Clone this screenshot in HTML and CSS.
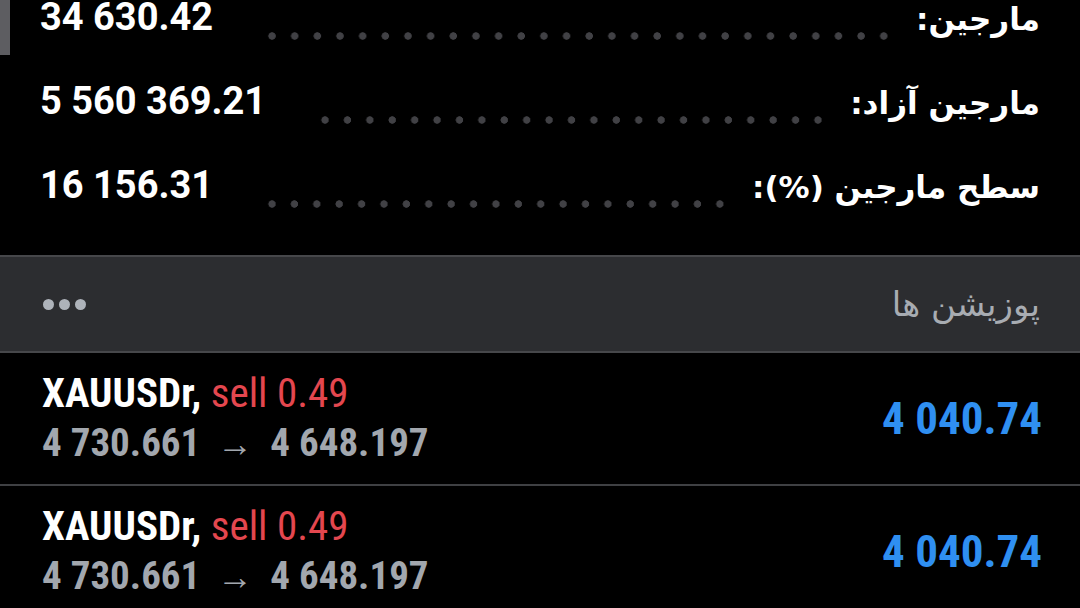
FILE: index.html
```html
<!DOCTYPE html>
<html lang="fa">
<head>
  <meta charset="UTF-8">
  <title>معاملات</title>
  <meta name="viewport" content="width=device-width, initial-scale=1.0">
  <link rel="stylesheet" href="styles.css">
</head>
<body>

<div class="screen">
  <div class="scrollbar"></div>

  <!-- account summary, scrolled part way -->
  <div class="summary">
    <div class="summary-row">
      <span class="value">34 630.42</span>
      <span class="leader"></span>
      <span class="label" dir="rtl">مارجین:</span>
    </div>
    <div class="summary-row">
      <span class="value">5 560 369.21</span>
      <span class="leader"></span>
      <span class="label" dir="rtl">مارجین آزاد:</span>
    </div>
    <div class="summary-row">
      <span class="value">16 156.31</span>
      <span class="leader"></span>
      <span class="label" dir="rtl">سطح مارجین (%):</span>
    </div>
  </div>

  <!-- positions header -->
  <div class="section-head">
    <span class="more"><i></i><i></i><i></i></span>
    <span class="section-title" dir="rtl">پوزیشن ها</span>
  </div>

  <!-- open positions -->
  <div class="position">
    <div class="pos-info">
      <div class="pos-line"><b class="symbol">XAUUSDr,</b> <span class="sell">sell 0.49</span></div>
      <div class="pos-prices">4 730.661 <span class="arrow">→</span> 4 648.197</div>
    </div>
    <div class="pos-profit">4 040.74</div>
  </div>
  <div class="position">
    <div class="pos-info">
      <div class="pos-line"><b class="symbol">XAUUSDr,</b> <span class="sell">sell 0.49</span></div>
      <div class="pos-prices">4 730.661 <span class="arrow">→</span> 4 648.197</div>
    </div>
    <div class="pos-profit">4 040.74</div>
  </div>
</div>

</body>
</html>
```

FILE: styles.css
```css
body {
  margin: 0;
  background-color: #000;
  color: #fff;
  font-family: Roboto, "DejaVu Sans", sans-serif;
}

.screen {
  position: relative;
  width: 1080px;
  height: 608px;
  overflow: hidden;
}

.scrollbar {
  position: absolute;
  top: 0;
  left: 0;
  width: 10px;
  height: 55px;
  background-color: #5d5d61;
}

/* summary rows */
.summary {
  margin-top: -25px;
  padding: 0 40px 0 40px;
}

.summary-row {
  display: flex;
  align-items: baseline;
  height: 84px;
  line-height: 84px;
}

.value {
  font-size: 38px;
  font-weight: 700;
}

.leader {
  flex: 1;
  align-self: stretch;
  margin: 0 21px 0 48px;
  background-image: radial-gradient(circle at center, #414145 3.4px, transparent 4px);
  background-size: 22px 8px;
  background-repeat: space no-repeat;
  background-position: 0 57px;
}

.label {
  font-family: "DejaVu Sans", sans-serif;
  font-size: 31px;
  font-weight: 700;
}

/* section header */
.section-head {
  display: flex;
  justify-content: space-between;
  align-items: center;
  height: 94px;
  margin-top: 28px;
  padding: 0 40px 0 43px;
  background-color: #2c2d30;
  border-top: 2px solid #46474a;
  border-bottom: 2px solid #46474a;
}

.more {
  display: flex;
  gap: 5px;
}

.more i {
  width: 11px;
  height: 11px;
  border-radius: 50%;
  background-color: #aeb3ba;
}

.section-title {
  font-family: "DejaVu Sans", sans-serif;
  font-size: 34px;
  color: #a8acb2;
}

/* positions */
.position {
  display: flex;
  justify-content: space-between;
  align-items: center;
  height: 131px;
  padding: 0 38px 0 42px;
  border-bottom: 2px solid #3f4043;
  font-family: "Roboto Condensed", "Liberation Sans Narrow", Roboto, sans-serif;
  font-stretch: condensed;
}

.pos-line,
.pos-prices {
  line-height: 50px;
}

.pos-line {
  font-size: 41px;
}

.symbol {
  font-weight: 700;
}

.sell {
  color: #e4474f;
}

.pos-prices {
  font-size: 39px;
  color: #a2a7ae;
  font-weight: 700;
}

.arrow {
  font-size: 36px;
  font-weight: 400;
  margin: 0 8px;
}

.pos-profit {
  font-size: 45px;
  font-weight: 700;
  color: #2f8ff1;
}
```
